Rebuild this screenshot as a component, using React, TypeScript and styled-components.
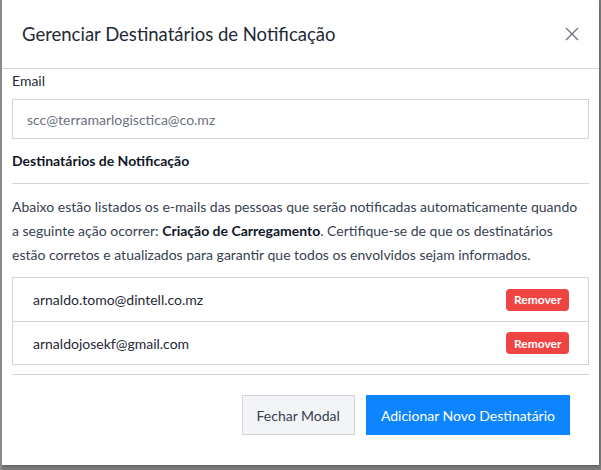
import React from 'react'
import styled, { createGlobalStyle } from 'styled-components'

const GlobalStyle = createGlobalStyle`
  html, body {
    margin: 0;
    padding: 0;
    background: #7d7d7d;
    font-family: Lato, "Noto Sans", sans-serif;
  }
  * {
    box-sizing: border-box;
  }
`

const Backdrop = styled.div`
  width: 601px;
  height: 470px;
  background: #7d7d7d;
  border-left: 2px solid #8a8a8a;
  overflow: hidden;
`

const Modal = styled.div`
  width: 597px;
  height: 465px;
  background: #ffffff;
  display: flex;
  flex-direction: column;
  box-shadow: 0 1px 3px rgba(0, 0, 0, 0.3);
`

const Header = styled.div`
  display: flex;
  align-items: center;
  justify-content: space-between;
  height: 69px;
  padding: 0 16px 0 20px;
  border-bottom: 1px solid #d1d5db;
`

const Title = styled.h2`
  margin: 0;
  font-size: 18.5px;
  font-weight: 400;
  color: #1f2937;
`

const CloseButton = styled.button`
  background: none;
  border: none;
  padding: 4px;
  cursor: pointer;
  color: #6b7280;
  display: flex;
  align-items: center;
`

const Body = styled.div`
  padding: 0 10px;
  display: flex;
  flex-direction: column;
`

const Label = styled.label`
  display: block;
  margin-top: 2px;
  font-size: 14px;
  line-height: 20px;
  color: #1f2937;
`

const Input = styled.input`
  margin-top: 8px;
  height: 40px;
  width: 100%;
  border: 1px solid #d1d5db;
  padding: 0 14px;
  font-family: inherit;
  font-size: 14px;
  color: #1f2937;
  outline: none;

  &::placeholder {
    color: #6b7280;
  }
`

const SectionTitle = styled.h3`
  margin: 11px 0 0;
  font-size: 14px;
  line-height: 22px;
  font-weight: 700;
  color: #111827;
`

const Divider = styled.hr<{ $gap?: number }>`
  margin: ${p => p.$gap ?? 11}px 0 0;
  border: none;
  border-top: 1px solid #d1d5db;
`

const Description = styled.p`
  margin: 11px 0 0;
  font-size: 14px;
  line-height: 24px;
  color: #374151;

  strong {
    color: #111827;
  }
`

const List = styled.ul`
  list-style: none;
  margin: 10px 0 0;
  padding: 0;
  border: 1px solid #d1d5db;
`

const Row = styled.li`
  display: flex;
  align-items: center;
  justify-content: space-between;
  height: 43px;
  padding: 0 19px 0 20px;
  font-size: 14px;
  color: #1f2937;

  & + & {
    border-top: 1px solid #d1d5db;
  }
`

const RemoveButton = styled.button`
  background: #ef4444;
  color: #ffffff;
  border: none;
  border-radius: 4px;
  height: 22px;
  padding: 0 7.5px;
  font-family: inherit;
  font-size: 12px;
  font-weight: 700;
  cursor: pointer;
`

const Footer = styled.div`
  display: flex;
  justify-content: flex-end;
  gap: 11px;
  margin-top: 20px;
  padding: 0 19px 0 0;
`

const Button = styled.button<{ $primary?: boolean }>`
  height: 40px;
  padding: 0 14px;
  font-family: inherit;
  font-size: 14px;
  cursor: pointer;
  border: 1px solid ${p => (p.$primary ? '#0d85ff' : '#d1d5db')};
  background: ${p => (p.$primary ? '#0d85ff' : '#f3f4f6')};
  color: ${p => (p.$primary ? '#ffffff' : '#374151')};
`

const recipients = ['arnaldo.tomo@dintell.co.mz', 'arnaldojosekf@gmail.com']

export default function App() {
  return (
    <>
      <GlobalStyle />
      <Backdrop>
        <Modal>
          <Header>
            <Title>Gerenciar Destinatários de Notificação</Title>
            <CloseButton aria-label="Fechar">
              <svg width="14" height="14" viewBox="0 0 14 14" fill="none" stroke="currentColor" strokeWidth="1.3">
                <path d="M1 1L13 13M13 1L1 13" />
              </svg>
            </CloseButton>
          </Header>
          <Body>
            <Label>Email</Label>
            <Input placeholder="scc@terramarlogisctica@co.mz" />
            <SectionTitle>Destinatários de Notificação</SectionTitle>
            <Divider />
            <Description>
              Abaixo estão listados os e-mails das pessoas que serão notificadas automaticamente quando
              <br />
              a seguinte ação ocorrer: <strong>Criação de Carregamento</strong>. Certifique-se de que os destinatários
              <br />
              estão corretos e atualizados para garantir que todos os envolvidos sejam informados.
            </Description>
            <List>
              {recipients.map(email => (
                <Row key={email}>
                  <span>{email}</span>
                  <RemoveButton>Remover</RemoveButton>
                </Row>
              ))}
            </List>
            <Divider $gap={9} />
            <Footer>
              <Button>Fechar Modal</Button>
              <Button $primary>Adicionar Novo Destinatário</Button>
            </Footer>
          </Body>
        </Modal>
      </Backdrop>
    </>
  )
}
